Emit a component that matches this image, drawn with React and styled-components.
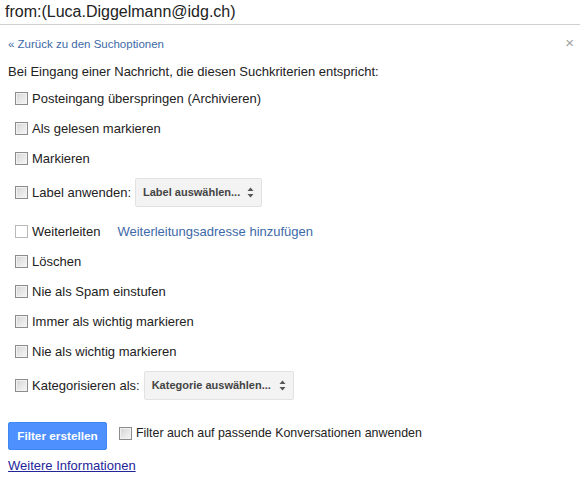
import React from "react";
import styled, { createGlobalStyle } from "styled-components";

const Global = createGlobalStyle`
  html, body { margin: 0; padding: 0; background: #fff; }
  body { font-family: "Liberation Sans", Arial, sans-serif; color: #222; }
`;

const Page = styled.div`
  width: 580px;
  height: 482px;
  overflow: hidden;
  background: #fff;
`;

const Header = styled.div`
  height: 24px;
  line-height: 24px;
  padding-left: 5px;
  font-size: 16px;
  color: #222;
  border-bottom: 1px solid #d0d0d0;
`;

const Panel = styled.div`
  padding: 0 8px;
`;

const TopBar = styled.div`
  margin-top: 9px;
  height: 20px;
  display: flex;
  align-items: center;
  justify-content: space-between;
`;

const BackLink = styled.a`
  font-size: 11.5px;
  color: #3d69a8;
  text-decoration: none;
`;

const Close = styled.span`
  font-size: 15px;
  line-height: 15px;
  color: #a0a0a0;
  margin-right: -2px;
  margin-top: -3px;
`;

const Intro = styled.div`
  margin-top: 8px;
  line-height: 20px;
  font-size: 13px;
  color: #222;
`;

const List = styled.div`
  margin-top: 1px;
  padding-left: 7px;
  display: flex;
  flex-direction: column;
`;

const Row = styled.div`
  display: flex;
  align-items: center;
  height: ${(p) => (p.$tall ? "38px" : "30px")};
  margin-bottom: ${(p) => (p.$tall ? "5px" : "0")};
  font-size: 13px;
  color: #222;
`;

const Box = styled.span`
  box-sizing: border-box;
  width: 13px;
  height: 13px;
  flex: none;
  margin-right: 4px;
  border: 1px solid ${(p) => (p.$plain ? "#b9b9b9" : "#8c8c8c")};
  background: ${(p) =>
    p.$plain
      ? "#fff"
      : "linear-gradient(135deg, #d4d4d4 0%, #e6e6e6 50%, #f7f7f7 100%)"};
  box-shadow: ${(p) => (p.$plain ? "none" : "inset 0 0 0 1px #f2f2f2")};
`;

const Select = styled.div`
  box-sizing: border-box;
  margin-left: 4px;
  width: ${(p) => p.$w}px;
  height: 29px;
  display: flex;
  align-items: center;
  justify-content: space-between;
  padding: 0 7px 0 7px;
  background: #f3f3f3;
  border: 1px solid #e2e2e2;
  border-radius: 2px;
  font-size: 11px;
  font-weight: bold;
  color: #444;
`;

const Arrows = styled.svg`
  width: 7px;
  height: 11px;
`;

const ForwardLink = styled.a`
  margin-left: 17px;
  color: #3d69a8;
  text-decoration: none;
`;

const ApplyRow = styled.div`
  margin-top: 13px;
  display: flex;
  align-items: flex-start;
`;

const Button = styled.button`
  box-sizing: border-box;
  width: 99px;
  height: 28px;
  background: #4d90fe;
  border: 1px solid #3f86f7;
  border-radius: 2px;
  color: #fff;
  font-family: "Liberation Sans", Arial, sans-serif;
  font-size: 11.8px;
  font-weight: bold;
  padding: 0;
`;

const Option = styled.label`
  margin-left: 12px;
  margin-top: 4px;
  display: flex;
  align-items: center;
  font-size: 12.4px;
  color: #222;
`;

const MoreLink = styled.a`
  display: block;
  margin-top: 8px;
  line-height: 16px;
  font-size: 13px;
  color: #25259a;
  text-decoration: underline;
`;

const ArrowIcon = () => (
  <Arrows viewBox="0 0 7 11">
    <path d="M3.5 0.5 L6.5 4 H0.5 Z" fill="#555" />
    <path d="M3.5 10.5 L6.5 7 H0.5 Z" fill="#555" />
  </Arrows>
);

const rowsA = [
  "Posteingang überspringen (Archivieren)",
  "Als gelesen markieren",
  "Markieren",
];
const rowsB = [
  "Löschen",
  "Nie als Spam einstufen",
  "Immer als wichtig markieren",
  "Nie als wichtig markieren",
];

export default function App() {
  return (
    <Page>
      <Global />
      <Header>from:(Luca.Diggelmann@idg.ch)</Header>
      <Panel>
        <TopBar>
          <BackLink href="#">« Zurück zu den Suchoptionen</BackLink>
          <Close>×</Close>
        </TopBar>
        <Intro>Bei Eingang einer Nachricht, die diesen Suchkriterien entspricht:</Intro>
        <List>
          {rowsA.map((t) => (
            <Row key={t}>
              <Box />
              {t}
            </Row>
          ))}
          <Row $tall>
            <Box />
            Label anwenden:
            <Select $w={127}>
              Label auswählen...
              <ArrowIcon />
            </Select>
          </Row>
          <Row>
            <Box $plain />
            Weiterleiten
            <ForwardLink href="#">Weiterleitungsadresse hinzufügen</ForwardLink>
          </Row>
          {rowsB.map((t) => (
            <Row key={t}>
              <Box />
              {t}
            </Row>
          ))}
          <Row $tall>
            <Box />
            Kategorisieren als:
            <Select $w={150}>
              Kategorie auswählen...
              <ArrowIcon />
            </Select>
          </Row>
        </List>
        <ApplyRow>
          <Button>Filter erstellen</Button>
          <Option>
            <Box />
            Filter auch auf passende Konversationen anwenden
          </Option>
        </ApplyRow>
        <MoreLink href="#">Weitere Informationen</MoreLink>
      </Panel>
    </Page>
  );
}
